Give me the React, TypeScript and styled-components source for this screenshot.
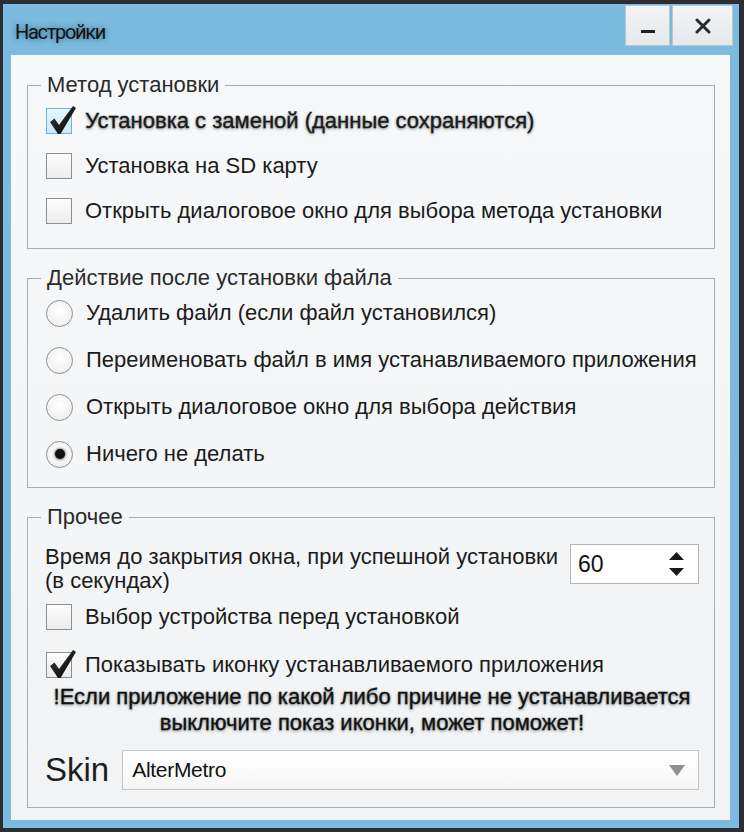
import React from 'react';
import styled, { createGlobalStyle } from 'styled-components';

const Global = createGlobalStyle`
  html, body { margin: 0; padding: 0; background: #2a2d31; }
  body { font-family: "Liberation Sans", Arial, sans-serif; }
  * { box-sizing: border-box; }
`;

const Outer = styled.div`
  width: 744px;
  height: 832px;
  background: #2a2d31;
  padding: 4px 5px 4px 3px;
  display: flex;
`;

const Frame = styled.div`
  flex: 1;
  display: flex;
  flex-direction: column;
  background: #7bbbe0;
  padding: 0 9px 8px 8px;
`;

const TitleBar = styled.div`
  height: 51px;
  margin-right: -6px;
  padding: 1px 3px 0 4px;
  display: flex;
  align-items: flex-start;
`;

const Title = styled.div`
  flex: 1;
  font-family: Roboto, "Noto Sans", sans-serif;
  font-size: 20px;
  line-height: 28px;
  margin-top: 13px;
  letter-spacing: -1.3px;
  color: #111;
  text-shadow: 0 0 6px rgba(0, 0, 0, 0.5);
`;

const WinButton = styled.div<{ $w: number }>`
  width: ${p => p.$w}px;
  height: 41px;
  margin-left: 2px;
  background: linear-gradient(#f2f4f6, #e6e9ec);
  border: 1px solid #b9c6cf;
  display: flex;
  align-items: center;
  justify-content: center;
  color: #222;
`;

const Client = styled.div`
  flex: 1;
  background: linear-gradient(#f7f8f9, #f1f3f4);
  padding: 18px 15px 12px 16px;
  display: flex;
  flex-direction: column;
  gap: 17px;
`;

const Group = styled.fieldset<{ $gap: number; $pt: number; $pb: number }>`
  margin: 0;
  min-width: 0;
  border: 1px solid #acacac;
  padding: ${p => p.$pt}px 15px ${p => p.$pb}px 17px;
  display: flex;
  flex-direction: column;
  gap: ${p => p.$gap}px;
`;

const Legend = styled.legend`
  font-size: 22px;
  line-height: 24px;
  color: #2a2a2a;
  padding: 0 6px;
  margin-left: -4px;
`;

const OptionRow = styled.label<{ $mt?: number; $strong?: boolean }>`
  display: flex;
  align-items: center;
  gap: 13px;
  height: 30px;
  margin-top: ${p => p.$mt ?? 0}px;
  font-size: 22px;
  color: #1b1b1b;
  white-space: nowrap;
  ${p =>
    p.$strong
      ? `text-shadow: 0 1px 3px rgba(0,0,0,0.55); -webkit-text-stroke: 0.3px #111;`
      : ''}
`;

const Box = styled.span<{ $accent?: boolean }>`
  position: relative;
  width: 26px;
  height: 26px;
  margin-left: 1px;
  flex: none;
  border: 1px solid ${p => (p.$accent ? '#62b9dc' : '#8e8e8e')};
  background: ${p =>
    p.$accent ? 'linear-gradient(#e6f6fd, #cbeaf7)' : 'linear-gradient(#fdfdfd, #ececec)'};
`;

const CheckMark = styled.svg`
  position: absolute;
  left: 1px;
  top: -4px;
  overflow: visible;
`;

const Radio = styled.span<{ $on?: boolean }>`
  width: 27px;
  height: 27px;
  margin-left: 1px;
  flex: none;
  border-radius: 50%;
  border: 1px solid #8e8e8e;
  background: radial-gradient(circle at 50% 40%, #ffffff, #ebebeb);
  display: flex;
  align-items: center;
  justify-content: center;
  &::after {
    content: '';
    width: 10px;
    height: 10px;
    border-radius: 50%;
    background: #111;
    box-shadow: 0 0 2px 1px rgba(0, 0, 0, 0.45);
    display: ${p => (p.$on ? 'block' : 'none')};
  }
`;

const TimeRow = styled.div<{ $mt: number }>`
  display: flex;
  align-items: flex-start;
  gap: 8px;
  margin-top: ${p => p.$mt}px;
`;

const TimeText = styled.div`
  flex: 1;
  font-size: 22px;
  line-height: 24px;
  color: #1b1b1b;
  white-space: nowrap;
  margin-top: 1px;
`;

const Spin = styled.div`
  width: 129px;
  height: 40px;
  background: #fff;
  border: 1px solid #b3b3b3;
  display: flex;
  align-items: center;
  padding: 0 14px 0 7px;
`;

const SpinValue = styled.span`
  flex: 1;
  font-size: 23px;
  color: #111;
`;

const Arrows = styled.div`
  display: flex;
  flex-direction: column;
  gap: 8px;
`;

const Warning = styled.div<{ $mt: number }>`
  margin-top: ${p => p.$mt}px;
  text-align: center;
  font-size: 22px;
  line-height: 26px;
  color: #111;
  white-space: nowrap;
  text-shadow: 0 1px 3px rgba(0, 0, 0, 0.55);
  -webkit-text-stroke: 0.3px #111;
`;

const SkinRow = styled.div<{ $mt: number }>`
  display: flex;
  align-items: center;
  gap: 13px;
  margin-top: ${p => p.$mt}px;
`;

const SkinLabel = styled.span`
  font-size: 33px;
  line-height: 40px;
  color: #1e1e1e;
`;

const Combo = styled.div`
  flex: 1;
  height: 40px;
  background: linear-gradient(#ffffff, #f6f6f6);
  border: 1px solid #c6c6c6;
  display: flex;
  align-items: center;
  padding: 0 13px 0 9px;
`;

const ComboText = styled.span`
  flex: 1;
  font-size: 21px;
  color: #111;
  letter-spacing: -0.3px;
`;

const Check = () => (
  <CheckMark width="28" height="30" viewBox="0 0 28 30">
    <defs>
      <linearGradient id="ck" x1="0" y1="0" x2="1" y2="1">
        <stop offset="0" stopColor="#3a3a3a" />
        <stop offset="1" stopColor="#050505" />
      </linearGradient>
    </defs>
    <path d="M2 17 L6.5 13.5 L11 20 L25 1 L28 3 L12.5 29 L10 29 Z" fill="url(#ck)" />
  </CheckMark>
);

const CheckBox = ({ on, accent }: { on?: boolean; accent?: boolean }) => (
  <Box $accent={accent}>{on && <Check />}</Box>
);

const Tri = ({ up, color = '#1a1a1a', w = 15, h = 8 }: { up?: boolean; color?: string; w?: number; h?: number }) => (
  <svg width={w} height={h} viewBox={`0 0 ${w} ${h}`}>
    <polygon points={up ? `0,${h} ${w / 2},0 ${w},${h}` : `0,0 ${w},0 ${w / 2},${h}`} fill={color} />
  </svg>
);

export default function App() {
  return (
    <>
      <Global />
      <Outer>
        <Frame>
          <TitleBar>
            <Title>Настройки</Title>
            <WinButton $w={45}>
              <svg width="14" height="20" viewBox="0 0 14 20">
                <rect x="0" y="14" width="14" height="3" fill="#222" />
              </svg>
            </WinButton>
            <WinButton $w={61}>
              <svg width="16" height="16" viewBox="0 0 16 16">
                <path d="M2 2 L14 14 M14 2 L2 14" stroke="#2a2a2a" strokeWidth="3" strokeLinecap="round" />
              </svg>
            </WinButton>
          </TitleBar>
          <Client>
            <Group $gap={15} $pt={9} $pb={22}>
              <Legend>Метод установки</Legend>
              <OptionRow $strong>
                <CheckBox on accent />
                Установка с заменой (данные сохраняются)
              </OptionRow>
              <OptionRow>
                <CheckBox />
                Установка на SD карту
              </OptionRow>
              <OptionRow>
                <CheckBox />
                Открыть диалоговое окно для выбора метода установки
              </OptionRow>
            </Group>
            <Group $gap={17} $pt={8} $pb={18}>
              <Legend>Действие после установки файла</Legend>
              <OptionRow>
                <Radio />
                Удалить файл (если файл установился)
              </OptionRow>
              <OptionRow>
                <Radio />
                Переименовать файл в имя устанавливаемого приложения
              </OptionRow>
              <OptionRow>
                <Radio />
                Открыть диалоговое окно для выбора действия
              </OptionRow>
              <OptionRow>
                <Radio $on />
                Ничего не делать
              </OptionRow>
            </Group>
            <Group $gap={0} $pt={0} $pb={17}>
              <Legend>Прочее</Legend>
              <TimeRow $mt={15}>
                <TimeText>
                  Время до закрытия окна, при успешной установки
                  <br />
                  (в секундах)
                </TimeText>
                <Spin>
                  <SpinValue>60</SpinValue>
                  <Arrows>
                    <Tri up />
                    <Tri />
                  </Arrows>
                </Spin>
              </TimeRow>
              <OptionRow $mt={9}>
                <CheckBox />
                Выбор устройства перед установкой
              </OptionRow>
              <OptionRow $mt={18}>
                <CheckBox on />
                Показывать иконку устанавливаемого приложения
              </OptionRow>
              <Warning $mt={4}>
                !Если приложение по какой либо причине не устанавливается
                <br />
                выключите показ иконки, может поможет!
              </Warning>
              <SkinRow $mt={14}>
                <SkinLabel>Skin</SkinLabel>
                <Combo>
                  <ComboText>AlterMetro</ComboText>
                  <Tri color="#8f8f8f" w={16} h={11} />
                </Combo>
              </SkinRow>
            </Group>
          </Client>
        </Frame>
      </Outer>
    </>
  );
}
